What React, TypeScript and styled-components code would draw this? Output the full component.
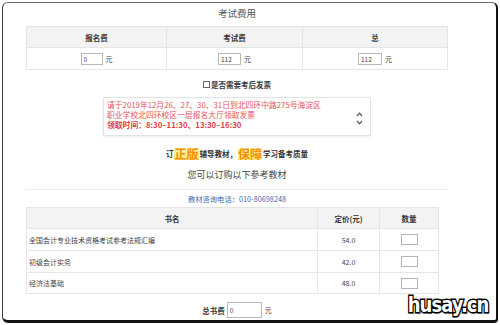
import React from 'react';
import styled, { createGlobalStyle } from 'styled-components';

const GlobalStyle = createGlobalStyle`
  html, body {
    margin: 0;
    padding: 0;
    background: #ffffff;
    overflow: hidden;
  }
  body {
    font-family: "Noto Sans CJK SC", "Noto Sans", sans-serif;
    color: #333;
  }
`;

const Frame = styled.div`
  position: relative;
  box-sizing: border-box;
  width: 496px;
  height: 321px;
  margin: 2px 0 0 2px;
  border-top: 1px solid #6a6a6a;
  border-left: 1px solid #3a3a3a;
  border-right: 2px solid #111;
  border-bottom: 3px solid #111;
  border-radius: 6px 6px 4px 6px;
  background: #fff;
  overflow: hidden;
`;

const Content = styled.div`
  width: 422px;
  margin-left: 23px;
  display: flex;
  flex-direction: column;
  align-items: center;
`;

const Title = styled.div`
  width: 100%;
  height: 23px;
  line-height: 21px;
  text-align: center;
  font-size: 9.5px;
  color: #555;
`;

const Table = styled.table<{ $width: number }>`
  width: ${(p) => p.$width}px;
  align-self: flex-start;
  border-collapse: collapse;
  table-layout: fixed;
  border: 1px solid #e4e4e4;
`;

const HeadCell = styled.th<{ $width?: number }>`
  ${(p) => (p.$width ? `width: ${p.$width}px;` : '')}
  background: #f3f3f3;
  border: 1px solid #e4e4e4;
  padding: 0;
  font-size: 7.5px;
  font-weight: bold;
  color: #333;
  text-align: center;
`;

const Cell = styled.td<{ $align?: 'left' | 'center' }>`
  border: 1px solid #e6e6e6;
  padding: 0 0 0 ${(p) => (p.$align === 'left' ? '2px' : '0')};
  font-size: 7px;
  color: #444;
  text-align: ${(p) => p.$align || 'center'};
  white-space: nowrap;
`;

const Row = styled.tr<{ $h: number }>`
  height: ${(p) => p.$h}px;
`;

const FeeInput = styled.input<{ $w: number; $h: number }>`
  box-sizing: border-box;
  width: ${(p) => p.$w}px;
  height: ${(p) => p.$h}px;
  padding: 0 2px;
  margin: 0;
  border: 1px solid #b9b9b9;
  border-radius: 0;
  font-family: inherit;
  font-size: 6.5px;
  color: #444;
  vertical-align: middle;
  outline: none;
`;

const Unit = styled.span`
  display: inline-block;
  margin-left: 3px;
  font-size: 7px;
  color: #444;
  vertical-align: middle;
`;

const CheckRow = styled.label`
  display: flex;
  align-items: center;
  gap: 1px;
  height: 15px;
  margin-top: 7px;
  font-size: 7.5px;
  font-weight: bold;
  color: #3a3a3a;
`;

const Box = styled.span`
  display: inline-block;
  width: 5px;
  height: 5px;
  border: 1px solid #666;
  background: #fff;
`;

const Notice = styled.div`
  box-sizing: border-box;
  display: flex;
  width: 268px;
  height: 39px;
  margin-top: 5px;
  border: 1px solid #e3e3e3;
  box-shadow: 0 1px 2px rgba(0, 0, 0, 0.06);
`;

const NoticeText = styled.div`
  flex: 1;
  padding: 2px 0 0 3px;
  font-size: 7.8px;
  line-height: 10px;
  color: #e5555a;
  white-space: nowrap;
`;

const NoticeLine = styled.div<{ $strong?: boolean }>`
  font-weight: ${(p) => (p.$strong ? 'bold' : 'normal')};
  color: ${(p) => (p.$strong ? '#dc3f44' : '#e5555a')};
`;

const Arrows = styled.div`
  width: 22px;
  display: flex;
  flex-direction: column;
  align-items: center;
  justify-content: center;
  gap: 3px;
  padding-top: 3px;
`;

const Slogan = styled.div`
  display: flex;
  align-items: center;
  height: 20px;
  margin-top: 7px;
  white-space: nowrap;
`;

const SloganSmall = styled.span`
  font-size: 7.5px;
  font-weight: bold;
  color: #333;
`;

const SloganBig = styled.span`
  font-size: 12px;
  font-weight: bold;
  color: #f39000;
  margin: 0 1px;
  background: linear-gradient(to bottom, transparent 20%, #fff1a8 20%, #ffe680 90%, transparent 90%);
`;

const Subtitle = styled.div`
  height: 24px;
  line-height: 24px;
  font-size: 9px;
  color: #444;
`;

const Divider = styled.div`
  width: 100%;
  height: 1px;
  margin-top: 2px;
  background: #ececec;
`;

const Phone = styled.div`
  height: 17px;
  line-height: 18px;
  font-size: 7.3px;
  color: #3b6db4;
`;

const QtyInput = styled.input`
  box-sizing: border-box;
  width: 17px;
  height: 11px;
  margin: 0;
  padding: 0;
  border: 1px solid #b5b5b5;
  border-radius: 0;
  vertical-align: middle;
  outline: none;
`;

const TotalRow = styled.div`
  display: flex;
  align-items: center;
  height: 16px;
  margin-top: 8px;
  font-size: 7.5px;
  color: #333;
`;

const TotalLabel = styled.span`
  font-weight: bold;
  margin-right: 2px;
`;

/* stamp in the lower right corner: white letters, black outline behind them */
const Watermark = styled.div`
  position: absolute;
  right: 8px;
  bottom: 4px;
  font-family: "DejaVu Sans", sans-serif;
  font-weight: bold;
  font-size: 22px;
  letter-spacing: -1.2px;
  line-height: 22px;
  transform: scale(0.82, 0.98);
  transform-origin: right bottom;
`;

const StampOutline = styled.span`
  position: absolute;
  left: 0;
  top: 0;
  color: #000;
  -webkit-text-stroke: 3px #000;
  text-shadow: 1px 2px 1px rgba(0, 0, 0, 0.4);
`;

const StampFill = styled.span`
  position: relative;
  color: #ffffff;
`;

const Chevron = ({ up }: { up?: boolean }) => (
  <svg width="7" height="5" viewBox="0 0 7 5">
    <path
      d={up ? 'M1 4 L3.5 1.2 L6 4' : 'M1 1 L3.5 3.8 L6 1'}
      fill="none"
      stroke="#555"
      strokeWidth="1.2"
    />
  </svg>
);

const books = [
  { name: '全国会计专业技术资格考试参考法规汇编', price: '54.0', h: 22 },
  { name: '初级会计实务', price: '42.0', h: 22 },
  { name: '经济法基础', price: '48.0', h: 21 },
];

const fees = [
  { value: '0', w: 22 },
  { value: '112', w: 23 },
  { value: '112', w: 24 },
];

export default function App() {
  return (
    <>
      <GlobalStyle />
      <Frame>
        <Content>
          <Title>考试费用</Title>
          <Table $width={422}>
            <thead>
              <Row $h={21}>
                <HeadCell $width={139}>报名费</HeadCell>
                <HeadCell $width={135}>考试费</HeadCell>
                <HeadCell>总</HeadCell>
              </Row>
            </thead>
            <tbody>
              <Row $h={22}>
                {fees.map((f, i) => (
                  <Cell key={i}>
                    <FeeInput $w={f.w} $h={12} defaultValue={f.value} readOnly />
                    <Unit>元</Unit>
                  </Cell>
                ))}
              </Row>
            </tbody>
          </Table>

          <CheckRow>
            <Box />
            是否需要考后发票
          </CheckRow>

          <Notice>
            <NoticeText>
              <NoticeLine>请于2019年12月26、27、30、31日到北四环中路275号海淀区</NoticeLine>
              <NoticeLine>职业学校北四环校区一层报名大厅领取发票</NoticeLine>
              <NoticeLine $strong>领取时间：8:30–11:30、13:30–16:30</NoticeLine>
            </NoticeText>
            <Arrows>
              <Chevron up />
              <Chevron />
            </Arrows>
          </Notice>

          <Slogan>
            <SloganSmall>订</SloganSmall>
            <SloganBig>正版</SloganBig>
            <SloganSmall>辅导教材，</SloganSmall>
            <SloganBig>保障</SloganBig>
            <SloganSmall>学习备考质量</SloganSmall>
          </Slogan>

          <Subtitle>您可以订购以下参考教材</Subtitle>
          <Divider />
          <Phone>教材咨询电话：010-80698248</Phone>

          <Table $width={413}>
            <thead>
              <Row $h={21}>
                <HeadCell $width={290}>书名</HeadCell>
                <HeadCell $width={61}>定价(元)</HeadCell>
                <HeadCell>数量</HeadCell>
              </Row>
            </thead>
            <tbody>
              {books.map((b) => (
                <Row key={b.name} $h={b.h}>
                  <Cell $align="left">{b.name}</Cell>
                  <Cell>{b.price}</Cell>
                  <Cell>
                    <QtyInput readOnly />
                  </Cell>
                </Row>
              ))}
            </tbody>
          </Table>

          <TotalRow>
            <TotalLabel>总书费</TotalLabel>
            <FeeInput $w={35} $h={16} defaultValue="0" readOnly />
            <Unit>元</Unit>
          </TotalRow>
        </Content>
        <Watermark>
          <StampOutline aria-hidden="true">husay.cn</StampOutline>
          <StampFill>husay.cn</StampFill>
        </Watermark>
      </Frame>
    </>
  );
}
